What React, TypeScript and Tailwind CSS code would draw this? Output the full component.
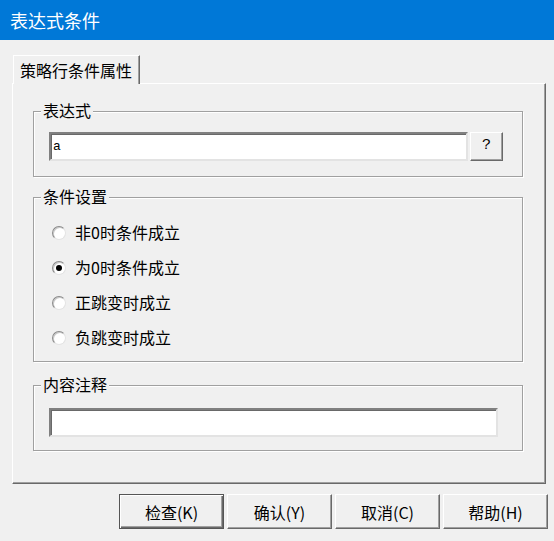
import React from "react";

const cjk = { fontFamily: '"Noto Sans CJK SC", "Noto Sans", sans-serif' };

// etched group frame with caption sitting on the top line
function Group({ title, className, children }: { title: string; className: string; children?: React.ReactNode }) {
  return (
    <div
      className={`w-[490px] border border-[#a0a0a0] shadow-[1px_1px_0_#ffffff,inset_1px_1px_0_#ffffff] ${className}`}
    >
      <div className="-mt-[11px] ml-[7px] w-fit bg-[#f0f0f0] px-[2px] text-[16px] leading-[18px] text-black">
        {title}
      </div>
      {children}
    </div>
  );
}

function Radio({ label, checked }: { label: string; checked?: boolean }) {
  return (
    <div className="flex h-[35px] items-center">
      <div className="ml-[18px] flex h-[14px] w-[14px] items-center justify-center rounded-full border border-t-[#8a8a8a] border-l-[#8a8a8a] border-r-[#e3e3e3] border-b-[#e3e3e3] bg-white shadow-[inset_1px_1px_0_#c8c8c8]">
        {checked && <div className="h-[6px] w-[6px] rounded-full bg-black" />}
      </div>
      <span className="ml-[9px] -mt-[2px] text-[16px] leading-[18px] text-black">{label}</span>
    </div>
  );
}

function Btn({ label, primary }: { label: string; primary?: boolean }) {
  return (
    <button
      className={`flex h-[35px] w-[105px] items-center justify-center bg-[#f0f0f0] text-[16px] leading-[18px] text-black ${
        primary
          ? "border border-[#555555] shadow-[inset_1px_1px_0_#ffffff,inset_-1px_-1px_0_#696969,inset_-2px_-2px_0_#a0a0a0]"
          : "border border-t-white border-l-white border-r-[#696969] border-b-[#696969] shadow-[inset_-1px_-1px_0_#a0a0a0]"
      }`}
    >
      {label}
    </button>
  );
}

const field =
  "bg-white border-2 border-t-[#808080] border-l-[#808080] border-r-[#e3e3e3] border-b-[#e3e3e3] shadow-[inset_1px_1px_0_#696969]";

export default function App() {
  return (
    <div className="flex h-[541px] w-[554px] flex-col overflow-hidden bg-[#f0f0f0]" style={cjk}>
      <div className="flex h-[40px] shrink-0 items-center bg-[#0078d7] pl-[10px] text-[18px] leading-[22px] text-white">
        表达式条件
      </div>

      <div className="pl-[12px] pt-[15px]">
        {/* tab header */}
        <div className="relative z-10 -mb-[1px] ml-[1px] flex h-[29px] w-[127px] items-center border-l border-t border-r border-white border-r-[#696969] bg-[#f0f0f0] pl-[6px] text-[16px] leading-[18px] text-black shadow-[inset_-1px_0_0_#a0a0a0]">
          策略行条件属性
        </div>

        {/* tab page */}
        <div className="h-[401px] w-[534px] border border-t-white border-l-white border-r-[#696969] border-b-[#696969] pl-[20px] pt-[27px] shadow-[inset_-1px_-1px_0_#a0a0a0]">
          <Group title="表达式" className="h-[66px]">
            <div className="ml-[15px] mt-[13px] flex gap-[2px]">
              <div className={`flex h-[29px] w-[419px] items-center pl-[2px] ${field}`}>
                <span className="text-[13px] leading-[15px] text-black" style={{ fontFamily: '"Liberation Mono", monospace' }}>
                  a
                </span>
              </div>
              <button className="flex h-[29px] w-[33px] items-center justify-center border border-t-white border-l-white border-r-[#696969] border-b-[#696969] bg-[#f0f0f0] text-[15px] text-black shadow-[inset_-1px_-1px_0_#a0a0a0]" style={{ fontFamily: '"Liberation Mono", monospace' }}>
                ?
              </button>
            </div>
          </Group>

          <Group title="条件设置" className="mt-[20px] h-[165px]">
            <div className="mt-[10px] flex flex-col">
              <Radio label="非0时条件成立" />
              <Radio label="为0时条件成立" checked />
              <Radio label="正跳变时成立" />
              <Radio label="负跳变时成立" />
            </div>
          </Group>

          <Group title="内容注释" className="mt-[23px] h-[66px]">
            <div className={`ml-[15px] mt-[15px] h-[29px] w-[449px] ${field}`} />
          </Group>
        </div>

        <div className="flex gap-[3px] pl-[107px] pt-[10px]">
          <Btn label="检查(K)" primary />
          <Btn label="确认(Y)" />
          <Btn label="取消(C)" />
          <Btn label="帮助(H)" />
        </div>
      </div>
    </div>
  );
}
